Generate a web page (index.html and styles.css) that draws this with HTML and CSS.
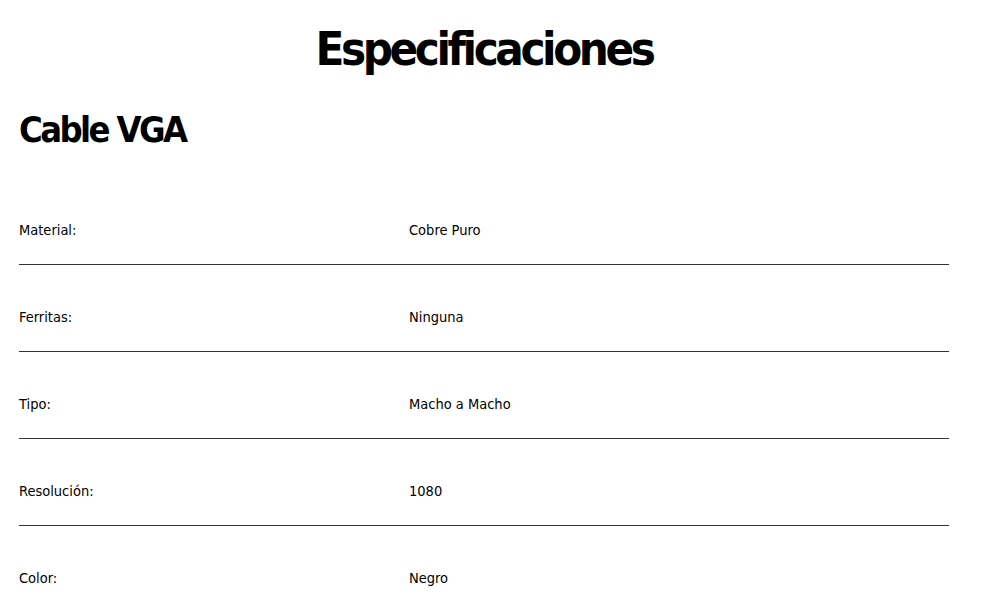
FILE: index.html
```html
<!DOCTYPE html>
<html lang="es">
<head>
<meta charset="utf-8">
<title>Especificaciones</title>
<link rel="stylesheet" href="styles.css">
</head>
<body>
<main class="specs">
  <h1 class="specs-title">Especificaciones</h1>
  <h2 class="product-name">Cable VGA</h2>
  <div class="spec-list">
    <div class="spec-row"><span class="spec-label">Material:</span><span class="spec-value">Cobre Puro</span></div>
    <div class="spec-row"><span class="spec-label">Ferritas:</span><span class="spec-value">Ninguna</span></div>
    <div class="spec-row"><span class="spec-label">Tipo:</span><span class="spec-value">Macho a Macho</span></div>
    <div class="spec-row"><span class="spec-label">Resolución:</span><span class="spec-value">1080</span></div>
    <div class="spec-row"><span class="spec-label">Color:</span><span class="spec-value">Negro</span></div>
  </div>
</main>
</body>
</html>
```

FILE: styles.css
```css
html, body {
  margin: 0;
  padding: 0;
  background: #fff;
}
body {
  font-family: "DejaVu Sans Condensed", "Roboto", sans-serif;
  color: #000;
  overflow: hidden;
  height: 596px;
}
.specs {
  width: 930px;
  margin-left: 19px;
}
.specs-title {
  margin: 0;
  padding-top: 22px;
  text-align: center;
  font-size: 47px;
  line-height: 54px;
  font-weight: 700;
  letter-spacing: -3.4px;
}
.product-name {
  margin: 0;
  padding-top: 31px;
  font-size: 36px;
  line-height: 46px;
  font-weight: 700;
  letter-spacing: -2.6px;
}
.spec-list {
  margin-top: 25px;
}
.spec-row {
  display: grid;
  grid-template-columns: 390px 1fr;
  padding: 42px 0 24px;
  line-height: 20px;
  font-size: 14.5px;
  border-bottom: 1px solid #333;
}
.spec-row:last-child {
  border-bottom: none;
}
```
